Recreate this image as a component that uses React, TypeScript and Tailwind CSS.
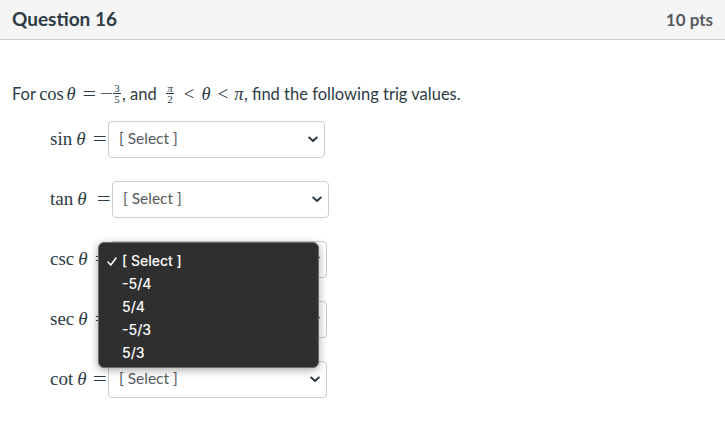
import React from 'react';

const mathFont = { fontFamily: '"Liberation Serif", "DejaVu Serif", serif' };

const Theta = () => <i className="italic">θ</i>;

// fixed-width math cell, so operators get KaTeX-like spacing
const Cell: React.FC<{ w: string; wide?: boolean; children: React.ReactNode }> = ({ w, wide, children }) => (
    <span className={`inline-flex ${w} shrink-0 justify-center text-[18.5px] leading-[24px]`} style={mathFont}>
        <span className={wide ? 'inline-block scale-x-[1.3]' : ''}>{children}</span>
    </span>
);

const Frac: React.FC<{ w: string; top: React.ReactNode; bottom: React.ReactNode }> = ({ w, top, bottom }) => (
    <span className={`inline-flex ${w} shrink-0 justify-center`}>
        <span className="inline-flex flex-col items-center text-[11px] leading-[10px] -translate-y-[1px]" style={mathFont}>
            <span className="px-[1px] border-b border-[#2d3b45]">{top}</span>
            <span className="px-[1px]">{bottom}</span>
        </span>
    </span>
);

const Chevron = () => (
    <svg width="10" height="7" viewBox="0 0 10 7" className="text-[#2d3b45]">
        <path d="M1.2 1.5 L5 5 L8.8 1.5" fill="none" stroke="currentColor" strokeWidth="2" strokeLinecap="round" strokeLinejoin="round" />
    </svg>
);

const SelectBox: React.FC<{ width: string }> = ({ width }) => (
    <div className={`${width} h-[37px] flex items-center justify-between pl-[10px] pr-[6px] bg-white border border-[#c7cdd1] rounded-[4px] text-[15.5px] text-[#555b61]`}>
        <span className="-translate-y-[1px]">[ Select ]</span>
        <Chevron />
    </div>
);

const Row: React.FC<{ fn: string; label: string; width: string }> = ({ fn, label, width }) => (
    <div className="flex items-center h-[37px] pl-[38px]">
        <span className={`${label} flex items-center justify-between pr-[1px] text-[19px] text-[#2d3b45] whitespace-nowrap`} style={mathFont}>
            <span>{fn}<span className="ml-[4px]"><Theta /></span></span>
            <span className="inline-block scale-x-[1.3] origin-right">=</span>
        </span>
        <SelectBox width={width} />
    </div>
);

const Check = () => (
    <svg width="10" height="9" viewBox="0 0 10 9" className="absolute left-[8px] top-[8px]">
        <path d="M1 5 L3.8 8 L9 1" fill="none" stroke="white" strokeWidth="1.5" strokeLinecap="round" strokeLinejoin="round" />
    </svg>
);

const Dropdown = () => (
    <div className="absolute left-[98px] top-[202px] w-[221px] h-[126px] bg-[#2f2f2f] border border-[#6a6a6a] rounded-[6px] shadow-[0_2px_8px_rgba(0,0,0,0.35)] pt-[6px]"
        style={{ fontFamily: 'Inter, "Liberation Sans", Arial, sans-serif' }}>
        {['[ Select ]', '-5/4', '5/4', '-5/3', '5/3'].map((o, i) => (
            <div key={o} className="relative h-[23px] flex items-center pl-[23px] text-[14px] font-medium text-white">
                {i === 0 && <Check />}
                {o}
            </div>
        ))}
    </div>
);

const App: React.FC = () => {
    return (
        <div className="w-[725px] h-[448px] bg-white text-[#2d3b45]" style={{ fontFamily: 'Lato, "Liberation Sans", sans-serif' }}>
            <div className="h-10 flex items-center justify-between px-3 bg-[#f5f5f5] border-b border-[#c7cdd1]">
                <h2 className="text-[19px] font-bold">Question 16</h2>
                <span className="text-[17px] font-bold text-[#555b61]">10 pts</span>
            </div>
            <div className="relative px-3 pt-[42px]">
                <p className="text-[16.5px] h-[24px] flex items-center whitespace-nowrap">
                    <span className="w-[27px] shrink-0">For</span>
                    <Cell w="w-[25px]">cos</Cell>
                    <Cell w="w-[14px]"><Theta /></Cell>
                    <Cell w="w-[22px]" wide>=</Cell>
                    <Cell w="w-[12px]" wide>−</Cell>
                    <Frac w="w-[10px]" top="3" bottom="5" />
                    <span className="w-[40px] shrink-0">, and</span>
                    <Frac w="w-[16px]" top={<i>π</i>} bottom="2" />
                    <Cell w="w-[22px]">&lt;</Cell>
                    <Cell w="w-[12px]"><Theta /></Cell>
                    <Cell w="w-[22px]">&lt;</Cell>
                    <Cell w="w-[10px]"><i>π</i></Cell>
                    <span>, find the following trig values.</span>
                </p>
                <div className="flex flex-col gap-[23px] mt-[15px]">
                    <Row fn="sin" label="w-[58px]" width="w-[217px]" />
                    <Row fn="tan" label="w-[62px]" width="w-[217px]" />
                    <Row fn="csc" label="w-[60px]" width="w-[217px]" />
                    <Row fn="sec" label="w-[60px]" width="w-[217px]" />
                    <Row fn="cot" label="w-[58px]" width="w-[219px]" />
                </div>
                <Dropdown />
            </div>
        </div>
    );
};

export default App;
